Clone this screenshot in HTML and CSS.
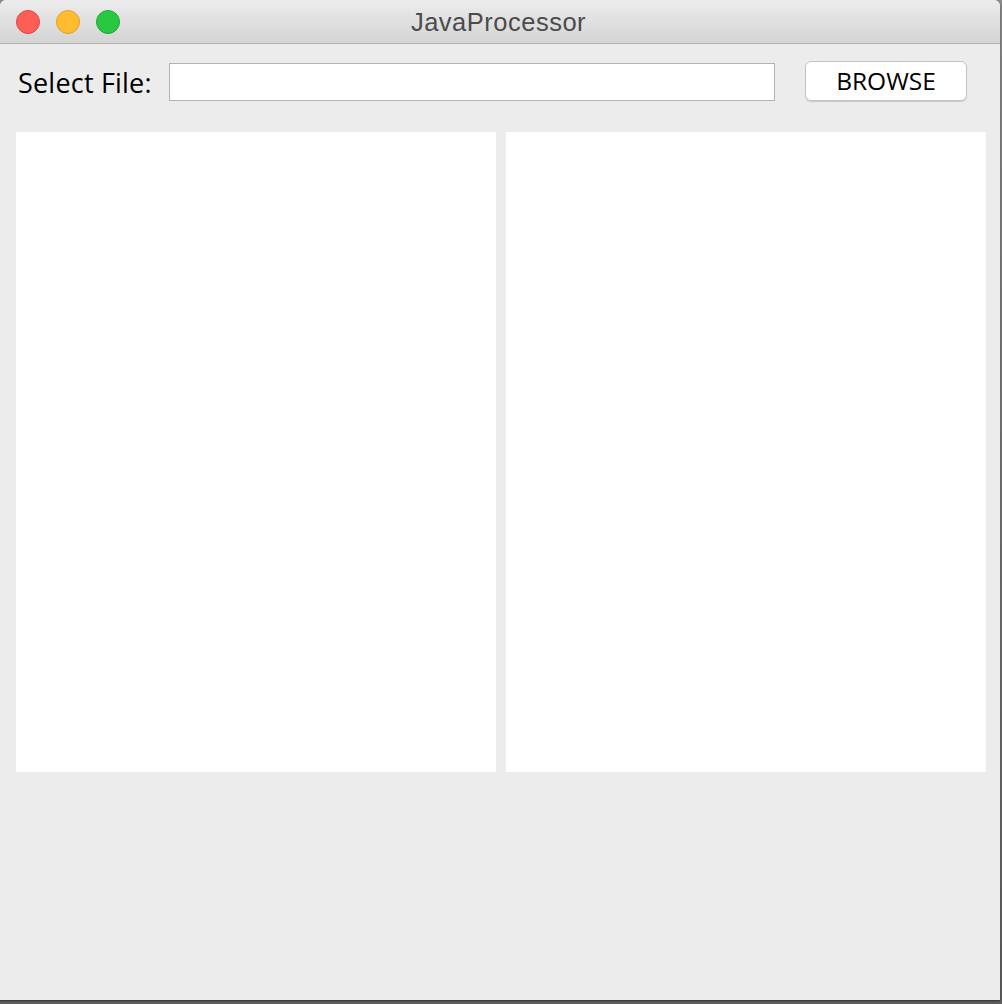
FILE: index.html
```html
<!DOCTYPE html>
<html>
<head>
<meta charset="utf-8">
<link rel="stylesheet" href="styles.css">
<title>JavaProcessor</title>
</head>
<body>
<div class="window">
  <div class="titlebar">
    <div class="lights">
      <span class="light red"></span>
      <span class="light yellow"></span>
      <span class="light green"></span>
    </div>
    <div class="title">JavaProcessor</div>
  </div>
  <div class="content">
    <div class="file-row">
      <label class="label">Select File:</label>
      <div class="field"></div>
      <button class="browse">BROWSE</button>
    </div>
    <div class="panels">
      <div class="panel"></div>
      <div class="panel"></div>
    </div>
  </div>
</div>
</body>
</html>
```
FILE: styles.css
```css
html, body {
  margin: 0;
  padding: 0;
}
body {
  width: 1002px;
  height: 1004px;
  overflow: hidden;
  background: linear-gradient(to bottom, #8a8a8a, #5e5e5e);
}
.window {
  width: 1000px;
  height: 1000px;
  background: #ececec;
  border-radius: 6px 6px 0 0;
  overflow: hidden;
  display: flex;
  flex-direction: column;
  box-shadow: 0 1px 2px rgba(0,0,0,0.5);
}
.titlebar {
  position: relative;
  height: 43px;
  flex: none;
  background: linear-gradient(to bottom, #ececec, #d4d4d4);
  border-bottom: 1px solid #b2b2b2;
  display: flex;
  align-items: center;
  justify-content: center;
}
.lights {
  position: absolute;
  left: 16px;
  top: 10px;
  display: flex;
  gap: 16px;
}
.light {
  width: 22px;
  height: 22px;
  border-radius: 50%;
  display: block;
}
.red { background: #fd5f57; border: 1px solid #e2463f; }
.yellow { background: #febc2e; border: 1px solid #e0a02a; }
.green { background: #28c840; border: 1px solid #1ea934; }
.title {
  font-family: "Liberation Sans", Arial, sans-serif;
  font-size: 25.5px;
  color: #4b4b4b;
  letter-spacing: 0.5px;
  margin-left: -3px;
  position: relative;
  top: 1px;
}
.content {
  flex: 1;
  display: flex;
  flex-direction: column;
  padding: 17px 0 0 16px;
}
.file-row {
  display: flex;
  align-items: center;
  height: 40px;
}
.label {
  font-family: "Open Sans", sans-serif;
  font-size: 27px;
  letter-spacing: 0.2px;
  color: #000;
  margin-left: 2px;
  width: 151px;
  white-space: nowrap;
  position: relative;
  top: 1px;
}
.field {
  width: 604px;
  height: 36px;
  margin-top: 2px;
  background: #fff;
  border: 1px solid #b3b3b3;
}
.browse {
  margin-left: 30px;
  width: 162px;
  height: 40px;
  background: #fff;
  border: 1px solid #c4c4c4;
  border-radius: 6px;
  box-shadow: 0 1px 1px rgba(0,0,0,0.15);
  font-family: "Open Sans", sans-serif;
  font-size: 24.5px;
  color: #000;
  padding: 0;
  line-height: 38px;
}
.panels {
  margin-top: 31px;
  display: flex;
  gap: 10px;
}
.panel {
  width: 480px;
  height: 640px;
  background: #fff;
}
```
